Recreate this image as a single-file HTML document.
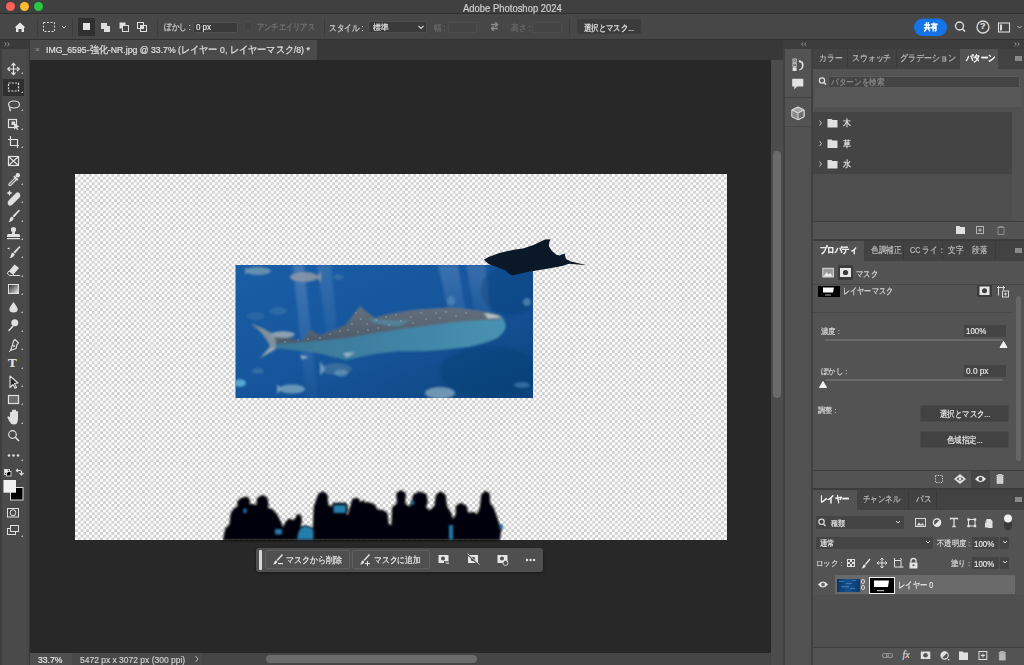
<!DOCTYPE html>
<html><head><meta charset="utf-8">
<style>
*{margin:0;padding:0;box-sizing:border-box}
html,body{width:1024px;height:665px;overflow:hidden;background:#282828;font-family:"Liberation Sans",sans-serif;color:#d8d8d8}
.a{position:absolute}
.t{position:absolute;white-space:nowrap;font-size:9px;line-height:10px;transform-origin:0 0;-webkit-text-stroke:0.2px currentColor}
svg{position:absolute;overflow:visible}
#title{left:0;top:0;width:1024px;height:14px;background:#404040;border-bottom:1px solid #2f2f2f}
#opts{left:0;top:14px;width:1024px;height:25px;background:#474747}
#below{left:0;top:39px;width:1024px;height:1px;background:#323232}
#tools{left:0;top:40px;width:29px;height:625px;background:#4a4a4a}
#tabbar{left:30px;top:40px;width:753px;height:20px;background:#383838}
#doctab{left:30px;top:40px;width:287px;height:20px;background:#4a4a4a}
#canvasbg{left:30px;top:60px;width:741px;height:593px;background:#282828}
#status{left:30px;top:653px;width:741px;height:12px;background:#494949}
#vscroll{left:771px;top:60px;width:12px;height:605px;background:#4c4c4c}
#vdiv{left:783px;top:40px;width:2px;height:625px;background:#424242}
#iconcol{left:785px;top:40px;width:26px;height:625px;background:#515151}
#pdiv{left:811px;top:40px;width:2px;height:625px;background:#404040}
#panel{left:813px;top:40px;width:211px;height:625px;background:#535353}
.chk{background-color:#fff;background-image:linear-gradient(45deg,#cdcdcd 25%,transparent 25%,transparent 75%,#cdcdcd 75%),linear-gradient(45deg,#cdcdcd 25%,transparent 25%,transparent 75%,#cdcdcd 75%);background-size:5.6px 5.6px;background-position:0 0,2.8px 2.8px}
.sep{position:absolute;width:1px;background:#3a3a3a}
.inp{position:absolute;background:#3b3b3b;border-radius:1px}
</style></head><body>
<div class="a" id="canvasbg"></div>
<div class="a" id="title"></div>
<div class="a" id="opts"></div>
<div class="a" id="below"></div>
<div class="a" id="tools"></div>
<div class="a" style="left:0;top:40px;width:2px;height:625px;background:#3e3e3e"></div>
<div class="a" style="left:26px;top:40px;width:3px;height:625px;background:#474747"></div>
<div class="a" style="left:29px;top:40px;width:1px;height:625px;background:#363636"></div>
<div class="a" id="tabbar"></div>
<div class="a" id="doctab"></div>
<div class="a" id="status"></div>
<div class="a" id="vscroll"></div>
<div class="a" id="vdiv"></div>
<div class="a" id="iconcol"></div>
<div class="a" id="pdiv"></div>
<div class="a" id="panel"></div>

<!-- TITLE -->
<div class="a" style="left:6px;top:2px;width:9px;height:9px;border-radius:50%;background:#fe5f57"></div>
<div class="a" style="left:20px;top:2px;width:9px;height:9px;border-radius:50%;background:#febc2e"></div>
<div class="a" style="left:34px;top:2px;width:9px;height:9px;border-radius:50%;background:#28c840"></div>

<!-- OPTIONS BAR -->
<svg style="left:0;top:14px" width="1024" height="25">
 <!-- home -->
 <path d="M14.5 13.5 L20 8.5 L25.5 13.5 L24 13.5 L24 18 L21.5 18 L21.5 15 L18.5 15 L18.5 18 L16 18 L16 13.5 Z" fill="#e6e6e6"/>
 <line x1="37.5" y1="4" x2="37.5" y2="22" stroke="#3c3c3c"/>
 <rect x="43.5" y="8.5" width="11" height="9" fill="none" stroke="#d8d8d8" stroke-dasharray="2 1.5"/>
 <path d="M62 12 L64 14 L66 12" fill="none" stroke="#cfcfcf" stroke-width="1"/>
 <line x1="72.5" y1="4" x2="72.5" y2="22" stroke="#3c3c3c"/>
 <rect x="78" y="4" width="17" height="18" fill="#303030"/>
 <rect x="83" y="9" width="7" height="7" fill="#e3e3e3"/>
 <rect x="101" y="9" width="6" height="6" fill="#dedede"/><rect x="104" y="12" width="6" height="6" fill="#dedede"/>
 <rect x="119.5" y="8.5" width="6" height="6" fill="#dedede"/><rect x="122.5" y="11.5" width="6" height="6" fill="#474747" stroke="#dedede"/>
 <rect x="137.5" y="8.5" width="6" height="6" fill="none" stroke="#dedede"/><rect x="140.5" y="11.5" width="6" height="6" fill="none" stroke="#dedede"/><rect x="140.5" y="11.5" width="3" height="3" fill="#dedede"/>
 <line x1="157.5" y1="4" x2="157.5" y2="22" stroke="#3c3c3c"/>
 <line x1="324.5" y1="4" x2="324.5" y2="22" stroke="#3c3c3c"/>
 <path d="M491 10.5 H497.5 M495.3 8.3 L497.5 10.5 L495.3 12.7 M498 14.5 H491.5 M493.7 12.3 L491.5 14.5 L493.7 16.7" fill="none" stroke="#8c8c8c" stroke-width="1.5"/>
 <line x1="569.5" y1="4" x2="569.5" y2="22" stroke="#3c3c3c"/>
 <rect x="914" y="4.5" width="33" height="17.5" rx="8.75" fill="#1473e6"/>
 <circle cx="959.5" cy="12" r="4" fill="none" stroke="#dcdcdc" stroke-width="1.4"/>
 <line x1="962.5" y1="15" x2="965" y2="17.5" stroke="#dcdcdc" stroke-width="1.6"/>
 <circle cx="983" cy="13" r="6" fill="none" stroke="#dcdcdc" stroke-width="1.3"/>
 <rect x="998.5" y="9" width="11" height="9" fill="none" stroke="#dcdcdc" stroke-width="1.1"/>
 <rect x="1000" y="10.5" width="2" height="6" fill="#dcdcdc"/>
 <path d="M1017.5 12 L1019.5 14 L1021.5 12" fill="none" stroke="#bdbdbd"/>
</svg>
<div class="t" style="left:980px;top:21px;font-size:9px;font-weight:bold;color:#dcdcdc">?</div>
<div class="inp" style="left:193px;top:21.7px;width:44.5px;height:11.6px;background:#3a3a3a;border:1px solid #505050"></div>
<div class="inp" style="left:367.5px;top:21.2px;width:59.5px;height:12px;background:#3a3a3a;border:1px solid #4e4e4e"></div>
<div class="inp" style="left:448px;top:21.5px;width:29px;height:11.5px;background:#444;border:1px solid #4e4e4e"></div>
<div class="inp" style="left:532px;top:21.5px;width:30px;height:11.5px;background:#444;border:1px solid #4e4e4e"></div>
<div class="inp" style="left:577px;top:19px;width:64px;height:15px;background:#3c3c3c"></div>
<svg style="left:0;top:14px" width="1024" height="25">
 <path d="M418.5 12 L421 14.5 L423.5 12" fill="none" stroke="#d0d0d0" stroke-width="1.1"/>
 <rect x="244" y="8" width="8" height="8" rx="1" fill="#424242" stroke="#505050" stroke-width="0.8"/>
</svg>


<div class="a" style="left:0;top:40px;width:29px;height:9px;background:#3a3a3a"></div>

<div class="a" style="left:3px;top:79px;width:21px;height:17px;background:#2f2f2f"></div>
<svg style="left:0;top:0" width="30" height="560">
<g fill="none" stroke="#e0e0e0" stroke-width="1.2">
 <!-- move 69 -->
 <path d="M13.5 63.5 V74.5 M8 69 H19"/>
 <path d="M11.5 65.5 L13.5 63.3 L15.5 65.5 M11.5 72.5 L13.5 74.7 L15.5 72.5 M10 67 L7.8 69 L10 71 M17 67 L19.2 69 L17 71" />
 <!-- marquee 87 -->
 <rect x="8.5" y="83" width="10" height="8" stroke-dasharray="2 1.3"/>
 <!-- lasso 106 -->
 <ellipse cx="14" cy="104.5" rx="5.5" ry="3.5"/>
 <path d="M10 107 Q9 110 11 111"/>
 <!-- object select 124 -->
 <rect x="8.5" y="119.5" width="8" height="8"/>
 <!-- crop 142 -->
 <path d="M10.5 136 V145.5 H19 M8 139.5 H17.5 V148"/>
 <!-- frame 161 -->
 <rect x="8.5" y="156.5" width="10" height="9"/>
 <path d="M8.5 156.5 L18.5 165.5 M18.5 156.5 L8.5 165.5"/>
 <!-- T 363 -->
 <!-- rect 399 -->
 <rect x="8.5" y="395.5" width="10" height="8" fill="#6a6a6a"/>
 <!-- zoom 436 -->
 <circle cx="12.5" cy="434.5" r="3.8"/>
 <path d="M15.3 437.3 L19 441" stroke-width="1.6"/>
 <!-- quick mask 512 -->
 <rect x="7.5" y="508.5" width="11" height="8.5" stroke-width="1"/>
 <ellipse cx="13" cy="512.7" rx="2.8" ry="3" stroke-width="1" />
 <!-- screen mode 531 -->
 <rect x="7.5" y="528.5" width="8" height="6" stroke-width="1"/>
 <rect x="10.5" y="525.5" width="8" height="6" stroke-width="1" fill="#4a4a4a"/>
</g>
<g fill="#e0e0e0">
 <path d="M11.5 121.5 H15 V123.5 L13.5 125 H11.5 Z"/>
 <path d="M14 122.5 L19.5 127 L17 127.3 L18.3 129.6 L17.2 130.2 L16 128 L14.2 129.5 Z"/>
 <!-- eyedropper 180 -->
 <circle cx="17.8" cy="175.2" r="2.2"/>
 <path d="M14.5 175.5 L18.5 179.5 L17.2 180.8 L13.2 176.8Z"/>
 <path d="M14.8 178.2 L16.3 179.7 L11 185 Q9.8 186.2 9 185.4 Q8.3 184.6 9.5 183.5Z" fill="none" stroke="#e0e0e0" stroke-width="1.1"/>
 <!-- healing 198 -->
 <path d="M9 200 L15.5 193.5 Q18.5 191 20 194 Q21 196.5 18.5 198.5 L12 205 Q9 207 7.8 204 Q7 202 9 200Z"/>
 <path d="M8.5 192 l1 -2 l1 2 l2 1 l-2 1 l-1 2 l-1 -2 l-2 -1 Z"/>
 <!-- brush 216 -->
 <path d="M19 209.5 L20 210.5 L14 217.5 L12.5 216 Z"/>
 <path d="M12 216.5 L13.7 218.2 Q13 221.5 8.5 222 Q10 220 10 218.5 Q10.5 216.8 12 216.5Z"/>
 <!-- stamp 234 -->
 <circle cx="13.5" cy="229.5" r="2.6"/>
 <path d="M12.3 231 H14.7 L15 234 H19 Q20 234.3 20 236 V237 H7 V236 Q7 234.3 8 234 H12 Z"/>
 <rect x="7" y="238" width="13" height="1.2"/>
 <!-- history brush 252 -->
 <path d="M19.5 246 L20.5 247 L15 253.5 L13.5 252 Z"/>
 <path d="M13 252.5 L14.7 254.2 Q14 257.5 9.5 258 Q11 256 11 254.5 Q11.5 252.8 13 252.5Z"/>
 <path d="M7 248.5 L9.5 247.5 L9.5 249.5 Z"/>
 <!-- eraser 271 -->
 <path d="M14.5 264.5 L19 268 L13.5 274.5 L9 271 Z"/>
 <path d="M9 271 L13.5 274.5 L12.5 275.5 H9.5 L7.7 274 Q7.2 273 8 272.2 Z" fill="none" stroke="#e0e0e0" stroke-width="1"/>
 <rect x="13" y="275" width="7" height="1"/>
 <!-- drop 307 -->
 <path d="M13.5 302 Q18 308 17.7 309.5 Q17.5 312.5 13.5 312.5 Q9.5 312.5 9.3 309.5 Q9 308 13.5 302Z"/>
 <!-- dodge 326 -->
 <circle cx="14.8" cy="322.8" r="3.5"/>
 <path d="M12.5 325.5 L8 330.5 L9 331.5 L13.7 326.5Z"/>
 <!-- pen 344 -->
 <path d="M15 339.5 L18.5 343 L17 344.5 L16 348.5 L10.5 350.5 L12.5 345 L13.5 341Z" fill="none" stroke="#e0e0e0" stroke-width="1.1" stroke-linejoin="round"/>
 <circle cx="14" cy="346" r="1"/>
 <path d="M9 352 L11.5 349.5" stroke="#e0e0e0" stroke-width="1"/>
 <!-- arrow 381 -->
 <path d="M10 376 L18 383 L14.5 383.5 L16.5 387.5 L15 388.3 L13 384.5 L10 387.5 Z" fill="#2a2a2a" stroke="#e0e0e0" stroke-width="1.1" stroke-linejoin="round"/>
 <!-- hand 418 -->
 <path d="M10 413 Q10 411.8 11 411.8 Q12 411.8 12 413 V410.7 Q12 409.5 13 409.5 Q14 409.5 14 410.7 V410.5 Q14.1 409.4 15 409.4 Q16 409.4 16 410.5 V412 Q16.1 411 17 411 Q18 411 18 412 V419 Q18 424.5 14 424.5 H13.5 Q11 424.5 9.5 421.5 L7.5 417.8 Q7 416.8 7.8 416.4 Q8.6 416 9.4 416.8 L10 417.6 Z"/>
 <!-- dots 455 -->
 <circle cx="9" cy="455.5" r="1.3"/><circle cx="13.5" cy="455.5" r="1.3"/><circle cx="18" cy="455.5" r="1.3"/>
 <!-- small indicators -->
 <path d="M21 74 L23 72 V74Z M21 93 L23 91 V93Z M21 111 L23 109 V111Z M21 130 L23 128 V130Z M21 148 L23 146 V148Z M21 185 L23 183 V185Z M21 203 L23 201 V203Z M21 222 L23 220 V222Z M21 240 L23 238 V240Z M21 258 L23 256 V258Z M21 277 L23 275 V277Z M21 295 L23 293 V295Z M21 313 L23 311 V313Z M21 332 L23 330 V332Z M21 350 L23 348 V350Z M21 369 L23 367 V369Z M21 387 L23 385 V387Z M21 405 L23 403 V405Z M21 424 L23 422 V424Z M21 461 L23 459 V461Z M21 537 L23 535 V537Z" fill="#bdbdbd"/>
</g>
<!-- gradient 289 -->
<defs><linearGradient id="gr1" x1="0" y1="0" x2="1" y2="1"><stop offset="0" stop-color="#222"/><stop offset="1" stop-color="#eee"/></linearGradient></defs>
<rect x="8.5" y="284.5" width="10" height="9" fill="url(#gr1)" stroke="#e0e0e0"/>
<!-- swatches -->
<rect x="10.5" y="487.5" width="12.5" height="12.5" fill="#000" stroke="#d8d8d8"/>
<rect x="3.5" y="480" width="12.5" height="12.7" fill="#f2f2f2"/>
<rect x="4.5" y="469.5" width="5" height="5" fill="none" stroke="#ddd" stroke-width="0.9"/>
<rect x="6.5" y="471.5" width="4.5" height="4.5" fill="#000" stroke="#ddd" stroke-width="0.9"/>
<rect x="4.8" y="469.8" width="3" height="3" fill="#eee"/>
<path d="M16.5 470.5 H20 Q21.5 470.5 21.5 472 V474.5 M19.5 473 L21.5 475 L23.5 473 M18 469 L16.3 470.5 L18 472" fill="none" stroke="#ddd" stroke-width="1.1"/>
</svg>
<div class="t" style="left:8px;top:356px;font-size:13px;line-height:14px;font-family:'Liberation Serif',serif;font-weight:bold;color:#e6e6e6">T</div>

<!-- icon column -->
<div class="a" style="left:783px;top:40px;width:241px;height:9px;background:#3c3c3c"></div>


<div class="a" style="left:785px;top:49px;width:26px;height:48px;background:#535353"></div>
<div class="a" style="left:785px;top:97px;width:26px;height:1px;background:#444"></div><div class="a" style="left:785px;top:98px;width:26px;height:28px;background:#535353"></div><div class="a" style="left:785px;top:126px;width:26px;height:1px;background:#484848"></div>
<svg style="left:0;top:0" width="1024" height="665">
 <g fill="#e2e2e2">
  <rect x="793" y="59" width="3.2" height="3.2" fill="none" stroke="#e2e2e2" stroke-width="0.8"/>
  <rect x="793" y="63.2" width="3.2" height="3.2" fill="none" stroke="#e2e2e2" stroke-width="0.8"/>
  <rect x="794.2" y="60.2" width="0.8" height="0.8"/><rect x="794.2" y="64.4" width="0.8" height="0.8"/>
  <rect x="792.6" y="67.3" width="4" height="3.7"/>
  <path d="M798.5 61.2 L800.2 59.6 L800.2 60.6 Q803.6 61.5 803.6 65.2 Q803.5 69.3 799.3 70.6 L799 69.6 Q802 68.5 802 65.2 Q802 62.7 800.2 62.2 L800.2 62.9Z"/>
  <path d="M792.2 78.8 H803.3 V86.4 H797 L794.3 89.6 V86.4 H792.2Z"/>
 </g>
 <path d="M798 107 L804 110 V116.8 L798 119.8 L791.8 116.8 V110Z" fill="#8a8a8a" stroke="#dcdcdc" stroke-width="1"/>
 <path d="M791.8 110 L798 113 L804 110 L798 107Z" fill="#a5a5a5" stroke="#dcdcdc" stroke-width="1" stroke-linejoin="round"/>
 <path d="M798 113 L804 110 V116.8 L798 119.8Z" fill="#6e6e6e" stroke="#dcdcdc" stroke-width="1" stroke-linejoin="round"/>
</svg>

<!-- PATTERN PANEL -->
<div class="a" style="left:813px;top:49px;width:211px;height:20px;background:#424242"></div>
<div class="a" style="left:960px;top:49px;width:38px;height:20px;background:#535353"></div>
<div class="a" style="left:1014.5px;top:56px;width:7px;height:5px;background:#8a8a8a"></div>
<div class="a" style="left:847px;top:49px;width:1px;height:20px;background:#3a3a3a"></div>
<div class="a" style="left:896px;top:49px;width:1px;height:20px;background:#3a3a3a"></div>
<div class="inp" style="left:828px;top:75.5px;width:192px;height:12px;background:#444;border:1px solid #5a5a5a"></div>
<svg style="left:0;top:0" width="1024" height="665">
 <circle cx="822" cy="80.5" r="2.6" fill="none" stroke="#e0e0e0" stroke-width="1.2"/>
 <path d="M824 82.5 L826 84.5" stroke="#e0e0e0" stroke-width="1.5"/>
</svg>
<div class="a" style="left:815px;top:88px;width:206px;height:19px;background:#585858"></div><div class="a" style="left:815px;top:107px;width:206px;height:5px;background:#4f4f4f"></div>
<div class="a" style="left:813px;top:112px;width:199px;height:62px;background:#444"></div>
<div class="a" style="left:813px;top:174px;width:199px;height:47px;background:#4e4e4e"></div>
<div class="a" style="left:1012px;top:112px;width:12px;height:109px;background:#525252"></div>
<div class="a" style="left:813px;top:221px;width:211px;height:1px;background:#3d3d3d"></div>
<svg style="left:0;top:0" width="1024" height="665">
 <g fill="none" stroke="#d0d0d0" stroke-width="0.9"><path d="M819.5 120.5 L821.5 123 L819.5 125.5 M819.5 141 L821.5 143.5 L819.5 146 M819.5 161.5 L821.5 164 L819.5 166.5"/></g>
 <g fill="#e0e0e0">
  <path d="M827.5 119 H831.5 L832.5 120 H837.5 V127.5 H827.5 Z"/>
  <path d="M827.5 139.5 H831.5 L832.5 140.5 H837.5 V148 H827.5 Z"/>
  <path d="M827.5 160 H831.5 L832.5 161 H837.5 V168.5 H827.5 Z"/>
  <!-- footer -->
  <path d="M956 226 H959.5 L960.5 227 H965 V234 H956 Z"/>
 </g>
 <rect x="976.5" y="226.5" width="7" height="7" fill="none" stroke="#bcbcbc" stroke-width="0.9"/>
 <path d="M980 228 V232 M978 230 H982" stroke="#bcbcbc" stroke-width="0.9"/>
 <path d="M997 227.5 H1005 M999 227.5 V226.5 H1003 V227.5 M998 228.5 V234.5 H1004 V228.5" fill="none" stroke="#8e8e8e" stroke-width="1"/>
</svg>

<!-- PROPERTIES PANEL -->
<div class="a" style="left:813px;top:239px;width:211px;height:2px;background:#3c3c3c"></div>
<div class="a" style="left:813px;top:241px;width:211px;height:20px;background:#424242"></div>
<div class="a" style="left:813px;top:241px;width:51px;height:20px;background:#535353"></div>
<div class="a" style="left:1014.5px;top:248px;width:7px;height:5px;background:#8a8a8a"></div>
<div class="a" style="left:903px;top:240px;width:1px;height:21px;background:#3a3a3a"></div>
<div class="a" style="left:942px;top:240px;width:1px;height:21px;background:#3a3a3a"></div>
<div class="a" style="left:995px;top:240px;width:1px;height:21px;background:#3a3a3a"></div>
<div class="a" style="left:838px;top:265px;width:15px;height:15px;background:#3c3c3c"></div>
<svg style="left:0;top:0" width="1024" height="665">
 <rect x="822.8" y="268.3" width="10.6" height="8.7" fill="#9a9a9a" stroke="#dcdcdc" stroke-width="1"/>
 <path d="M823.5 276.5 L826.5 272.3 L828.7 274.6 L830.3 273 L832.8 276.5Z" fill="#eeeeee"/>
 <rect x="840" y="268" width="11" height="9" fill="#e6e6e6"/>
 <circle cx="845.5" cy="272.5" r="2.6" fill="#3c3c3c"/>
 <rect x="818" y="286" width="22" height="11" fill="#000"/>
 <path d="M823 287.5 H834 L833 292.5 H823Z" fill="#fff"/>
 <rect x="825" y="294.5" width="6" height="1" fill="#aaa"/>
 <rect x="977" y="285" width="15" height="12" fill="#3c3c3c"/>
 <rect x="979.5" y="286.5" width="10" height="8.5" fill="#e6e6e6"/>
 <circle cx="984.5" cy="290.7" r="2.5" fill="#3c3c3c"/>
 <path d="M998.5 286 V295.5 M997 287.5 H1005 M1003.5 286 V290" fill="none" stroke="#d8d8d8" stroke-width="1"/>
 <rect x="1002.5" y="291" width="6" height="6" fill="#535353" stroke="#d8d8d8" stroke-width="1"/>
 <path d="M1005.5 292.5 V295.5 M1004 294 H1007" stroke="#d8d8d8" stroke-width="0.9"/>
</svg>
<div class="a" style="left:813px;top:284px;width:211px;height:1px;background:#474747"></div>
<div class="a" style="left:813px;top:312px;width:200px;height:1px;background:#484848"></div>
<div class="a" style="left:1016px;top:296px;width:5px;height:165px;background:#666;border-radius:3px"></div>
<div class="inp" style="left:964px;top:325px;width:42px;height:12px;background:#444"></div>
<div class="a" style="left:825px;top:338.5px;width:178px;height:2px;background:#6a6a6a;border-radius:1px"></div>
<div class="inp" style="left:964px;top:365px;width:42px;height:12px;background:#444"></div>
<div class="a" style="left:825px;top:379.2px;width:178px;height:2px;background:#6a6a6a;border-radius:1px"></div>
<svg style="left:0;top:0" width="1024" height="665">
 <path d="M1003.5 341.5 L1007 347.5 H1000Z" fill="#f2f2f2" stroke="#f2f2f2" stroke-linejoin="round"/>
 <path d="M823 381.5 L826.5 387.5 H819.5Z" fill="#f2f2f2" stroke="#f2f2f2" stroke-linejoin="round"/>
</svg>
<div class="inp" style="left:920px;top:405px;width:89px;height:17px;background:#424242;border:1px solid #4a4a4a"></div>
<div class="inp" style="left:920px;top:431px;width:89px;height:17px;background:#424242;border:1px solid #4a4a4a"></div>
<div class="a" style="left:813px;top:470px;width:211px;height:1px;background:#3d3d3d"></div>
<div class="a" style="left:971px;top:471px;width:19px;height:17px;background:#464646"></div>
<svg style="left:0;top:0" width="1024" height="665">
 <rect x="935.5" y="475.5" width="7" height="7" fill="none" stroke="#d0d0d0" stroke-dasharray="1.2 1.2"/>
 <path d="M954 479 L960 474 L966 479 L960 484Z" fill="#e0e0e0"/>
 <path d="M956.5 479 Q960 475.5 963.5 479 Q960 482.5 956.5 479Z" fill="#535353"/>
 <circle cx="960" cy="479" r="1.4" fill="#e0e0e0"/>
 <path d="M975 479 Q980.5 472.5 986 479 Q980.5 485.5 975 479Z" fill="#e8e8e8"/>
 <circle cx="980.5" cy="479" r="2" fill="#464646"/>
 <path d="M996 475.5 H1004 M998 475.5 V474.5 H1002 V475.5 M997 476.5 V483.5 H1003 V476.5Z" fill="#cfcfcf" stroke="#cfcfcf" stroke-width="0.8"/>
</svg>

<!-- LAYERS PANEL -->
<div class="a" style="left:813px;top:487.5px;width:211px;height:2px;background:#3c3c3c"></div>
<div class="a" style="left:813px;top:489.5px;width:211px;height:20px;background:#424242"></div>
<div class="a" style="left:813px;top:489.5px;width:44px;height:20px;background:#535353"></div>
<div class="a" style="left:908px;top:490px;width:1px;height:20px;background:#3a3a3a"></div>
<div class="a" style="left:936px;top:490px;width:1px;height:20px;background:#3a3a3a"></div>
<div class="a" style="left:1014.5px;top:497px;width:7px;height:5px;background:#8a8a8a"></div>
<div class="inp" style="left:816px;top:516px;width:88px;height:13px;background:#444"></div>
<div class="inp" style="left:816px;top:537px;width:117px;height:12px;background:#444"></div>
<div class="inp" style="left:972px;top:537px;width:27px;height:12px;background:#444"></div>
<div class="inp" style="left:1000px;top:537px;width:9px;height:12px;background:#444"></div>
<div class="inp" style="left:972px;top:557px;width:27px;height:12px;background:#444"></div>
<div class="inp" style="left:1000px;top:557px;width:9px;height:12px;background:#444"></div>
<div class="a" style="left:835px;top:575px;width:180px;height:19px;background:#6a6a6a"></div>
<div class="a" style="left:837px;top:578.5px;width:22.5px;height:13px;background:linear-gradient(90deg,#0b3468,#16528f 45%,#0c3a70)"></div>
<svg style="left:0;top:0" width="1024" height="665"><g fill="#4a90c0" opacity="0.7"><rect x="839" y="581" width="5" height="1"/><rect x="846" y="583" width="6" height="1"/><rect x="841" y="586" width="8" height="1.2"/><rect x="852" y="580" width="4" height="1"/><rect x="850" y="588" width="5" height="1"/></g></svg>
<div class="a" style="left:869px;top:577px;width:26px;height:17px;background:#000;border:1px solid #f0f0f0"></div>
<svg style="left:0;top:0" width="1024" height="665">
 <g fill="none" stroke="#d8d8d8" stroke-width="1">
  <circle cx="821.5" cy="521.8" r="2.7" stroke-width="1.2"/><path d="M823.5 524 L825.5 526" stroke-width="1.5"/>
  <path d="M896 521 L898 523 L900 521 M926 541 L928 543 L930 541 M1003 541 L1005 543 L1007 541 M1003 561 L1005 563 L1007 561"/>
  <rect x="915.5" y="518.5" width="10" height="8"/>
 </g>
 <path d="M916.5 525.5 L919 522.5 L921 524.5 L922.5 523 L924.5 525.5Z" fill="#d8d8d8"/>
 <circle cx="937" cy="522.5" r="4.2" fill="#e8e8e8"/>
 <path d="M934 525.5 L940 519.5 A4.2 4.2 0 0 0 934 525.5Z" fill="#535353"/>
 <circle cx="937" cy="522.5" r="3.6" fill="none" stroke="#e8e8e8" stroke-width="1.2"/>
 <!-- T -->
 <path d="M950.5 519.5 V518.5 H957.5 V519.5 M954 518.5 V526.5 M952.3 526.5 H955.7" fill="none" stroke="#e0e0e0" stroke-width="1.3"/>
 <!-- transform -->
 <rect x="968.5" y="519.5" width="6.5" height="6.5" fill="none" stroke="#e0e0e0"/>
 <rect x="967.3" y="518.3" width="2.4" height="2.4" fill="#e0e0e0"/><rect x="973.8" y="518.3" width="2.4" height="2.4" fill="#e0e0e0"/><rect x="967.3" y="524.8" width="2.4" height="2.4" fill="#e0e0e0"/><rect x="973.8" y="524.8" width="2.4" height="2.4" fill="#e0e0e0"/>
 <!-- smart obj -->
 <path d="M986.5 519 H990.5 L992.5 521 V528 H988 V523.5 H986.5Z" fill="#e0e0e0"/>
 <rect x="985" y="523" width="5.5" height="4.5" fill="#e0e0e0"/>
 <path d="M986 523 V521.5 Q986 520 987.7 520 Q989.5 520 989.5 521.5 V523" fill="none" stroke="#e0e0e0" stroke-width="1"/>
 <!-- toggle -->
 <rect x="1004" y="519" width="8" height="11" rx="4" fill="#3a3a3a"/>
 <circle cx="1008" cy="518.5" r="4" fill="#f0f0f0"/>
</g>
 <!-- lock icons -->
 <rect x="847" y="559" width="8" height="8" fill="#e0e0e0"/>
 <rect x="848" y="560" width="2" height="2" fill="#535353"/><rect x="852" y="560" width="2" height="2" fill="#535353"/><rect x="850" y="562" width="2" height="2" fill="#535353"/><rect x="848" y="564" width="2" height="2" fill="#535353"/><rect x="852" y="564" width="2" height="2" fill="#535353"/>
 <path d="M869.5 558.5 L870.5 559.5 L866 565 L865 564Z" fill="#e6e6e6"/>
 <path d="M864.5 564.5 L865.8 565.8 Q865 568.5 861.5 568.5 Q863 567 863 565.8 Q863.5 564.6 864.5 564.5Z" fill="#e6e6e6"/>
 <path d="M882 558 V568 M877 563 H887 M880.3 559.7 L882 558 L883.7 559.7 M880.3 566.3 L882 568 L883.7 566.3 M878.7 561.3 L877 563 L878.7 564.7 M885.3 561.3 L887 563 L885.3 564.7" fill="none" stroke="#e0e0e0" stroke-width="1"/>
 <path d="M894 560.5 H901 V567.5 M894.5 558 V567 H903.5 M900 558.5 L902 559.5" fill="none" stroke="#e0e0e0" stroke-width="1"/>
 <rect x="909.5" y="562.5" width="8" height="6" fill="#e6e6e6"/>
 <path d="M911 562.5 V560.5 Q911 558.5 913.5 558.5 Q916 558.5 916 560.5 V562.5" fill="none" stroke="#e6e6e6" stroke-width="1.3"/>
 <circle cx="913.5" cy="565.2" r="1" fill="#535353"/>
 <!-- layer row -->
 <path d="M818 584.5 Q823 578.5 828 584.5 Q823 590.5 818 584.5Z" fill="#eaeaea"/>
 <circle cx="823" cy="584.5" r="1.9" fill="#6a6a6a"/>
 <rect x="861.5" y="579.5" width="3" height="4" rx="1.5" fill="none" stroke="#ddd" stroke-width="0.9"/>
 <rect x="861.5" y="585.5" width="3" height="4" rx="1.5" fill="none" stroke="#ddd" stroke-width="0.9"/>
 <path d="M874 580.5 H889 L888 587 H874Z" fill="#fff"/>
 <rect x="877" y="590" width="7" height="1.2" fill="#bbb"/>
</svg>
<div class="a" style="left:813px;top:595px;width:211px;height:52px;background:#4f4f4f"></div>
<div class="a" style="left:813px;top:647px;width:211px;height:1px;background:#3d3d3d"></div>
<svg style="left:0;top:0" width="1024" height="665">
 <g fill="none" stroke="#8e8e8e" stroke-width="1.1">
  <rect x="882.5" y="653.5" width="6" height="4" rx="2"/><rect x="886.5" y="653.5" width="6" height="4" rx="2"/>
 </g>
 <rect x="920.8" y="651.5" width="9.5" height="7.5" fill="#e0e0e0"/>
 <circle cx="925.5" cy="655.2" r="2.3" fill="#535353"/>
 <circle cx="944.6" cy="655.5" r="3.6" fill="none" stroke="#e0e0e0" stroke-width="1.1"/>
 <path d="M942 658 L947.2 652.8 A3.6 3.6 0 0 0 942 658Z" fill="#e0e0e0"/>
 <rect x="948" y="659" width="1.3" height="1.3" fill="#e0e0e0"/>
 <path d="M959 651.5 H962.5 L963.5 652.5 H968 V660 H959Z" fill="#e0e0e0"/>
 <rect x="979" y="651.5" width="7.8" height="8" fill="none" stroke="#e0e0e0" stroke-width="1"/>
 <path d="M982.9 653.5 V657.5 M980.9 655.5 H984.9" stroke="#e0e0e0"/>
 <path d="M998.5 652.5 H1006 M1000.5 652.5 V651.5 H1004 V652.5 M999.3 653.5 V660 H1005.2 V653.5Z" fill="#b8b8b8" stroke="#b8b8b8" stroke-width="0.8"/>
</svg>
<div class="t" style="left:902.5px;top:650px;font-size:10px;font-style:italic;font-family:'Liberation Serif',serif;color:#d8d8d8">fx</div>

<!-- doc tab -->
<div class="t" style="left:35px;top:45px;font-size:8px;color:#8a8a8a">×</div>
<!-- v scroll thumb -->
<div class="a" style="left:773px;top:151px;width:8px;height:247px;background:#6b6b6b;border-radius:4px"></div>
<!-- status bar -->
<div class="a" style="left:30px;top:653px;width:42px;height:12px;background:#4f4f4f"></div>

<div class="a" style="left:202px;top:653px;width:569px;height:12px;background:#454545"></div>
<div class="a" style="left:266px;top:655px;width:211px;height:8px;background:#6b6b6b;border-radius:4px"></div>

<!-- CANVAS IMAGE -->
<div class="a chk" style="left:75px;top:174px;width:652px;height:366px"></div>
<svg style="left:0;top:0" width="1024" height="665">
 <defs>
  <linearGradient id="bl" x1="0" y1="0" x2="1" y2="1">
   <stop offset="0" stop-color="#1a5ea6"/><stop offset="0.5" stop-color="#16559c"/><stop offset="1" stop-color="#0e447e"/>
  </linearGradient>
  <linearGradient id="ray" x1="0" y1="0" x2="0" y2="1">
   <stop offset="0" stop-color="#a8c0e0" stop-opacity="0.28"/><stop offset="1" stop-color="#a8c0e0" stop-opacity="0.03"/>
  </linearGradient>
  <linearGradient id="belly" x1="0" y1="0" x2="1" y2="0">
   <stop offset="0" stop-color="#3a7492"/><stop offset="0.6" stop-color="#4084a6"/><stop offset="1" stop-color="#4a92b2"/>
  </linearGradient>
  <linearGradient id="back" x1="0" y1="0" x2="0" y2="1">
   <stop offset="0" stop-color="#66717d"/><stop offset="1" stop-color="#485767"/>
  </linearGradient>
  <filter id="bl1" x="-10%" y="-10%" width="120%" height="120%"><feGaussianBlur stdDeviation="0.9"/></filter>
  <filter id="bl2" x="-20%" y="-20%" width="140%" height="140%"><feGaussianBlur stdDeviation="1.5"/></filter>
  <clipPath id="imgclip"><rect x="235.5" y="265" width="297.5" height="133"/></clipPath>
 </defs>
 <rect x="235.5" y="265" width="297.5" height="133" fill="url(#bl)"/>
 <g clip-path="url(#imgclip)">
  <g filter="url(#bl2)">
   <path d="M293 265 L304 265 L318 398 L306 398Z" fill="url(#ray)"/>
   <path d="M317 265 L331 265 L340 360 L330 360Z" fill="url(#ray)" opacity="0.7"/>
   <path d="M438 265 L458 265 L470 340 L455 340Z" fill="url(#ray)" opacity="0.9"/>
   <path d="M466 265 L485 265 L492 330 L478 330Z" fill="url(#ray)" opacity="0.8"/>
   <ellipse cx="490" cy="372" rx="50" ry="26" fill="#0c3a6a" opacity="0.35"/>
   <ellipse cx="510" cy="290" rx="30" ry="25" fill="#0c3a6a" opacity="0.3"/>
  </g>
  <g filter="url(#bl1)">
   <ellipse cx="258" cy="271" rx="13" ry="4" fill="#7097b0" opacity="0.85"/>
   <path d="M245 267 L249 271 L245 275Z" fill="#7097b0" opacity="0.85"/>
   <ellipse cx="304" cy="277" rx="14" ry="5" fill="#8a97a6" opacity="0.9"/>
   <path d="M321 271 L317 277 L321 283Z" fill="#8a97a6"/>
   <ellipse cx="338" cy="277" rx="6" ry="3" fill="#3f78a8" opacity="0.6"/>
   <ellipse cx="278" cy="311" rx="9" ry="4" fill="#3a74a6" opacity="0.6"/>
   <ellipse cx="256" cy="316" rx="9" ry="4" fill="#3a74a6" opacity="0.5"/>
   <ellipse cx="451" cy="301" rx="4" ry="5" fill="#5a8fb8" opacity="0.6"/>
   <ellipse cx="527" cy="302" rx="4" ry="4" fill="#6a9cc0" opacity="0.6"/>
   <ellipse cx="336" cy="369" rx="16" ry="6" fill="#3a6e9c" opacity="0.9"/>
   <ellipse cx="341" cy="373" rx="7" ry="3.5" fill="#6a9ab8" opacity="0.7"/>
   <path d="M320 361 L325 369 L320 376Z" fill="#7aaac8" opacity="0.8"/>
   <ellipse cx="292" cy="389" rx="13" ry="4.5" fill="#6f9fbd" opacity="0.9"/>
   <path d="M277 384 L282 389 L277 394Z" fill="#6f9fbd"/>
   <ellipse cx="240" cy="383" rx="6" ry="3.8" fill="#5fb0d8" opacity="0.9"/>
   <ellipse cx="258" cy="371" rx="6" ry="3" fill="#4a7fae" opacity="0.6"/>
   <ellipse cx="440" cy="393" rx="15" ry="6" fill="#7ea2bc" opacity="0.85"/>
   <ellipse cx="522" cy="385" rx="8" ry="3" fill="#4f86b2" opacity="0.6"/>
  </g>
  <!-- whale shark -->
  <g filter="url(#bl1)">
   <path d="M251 323.7 Q262 327 272.8 333.8 Q288 338 302 341 L310.7 329.5 L319.4 335.3 Q333 331 345.6 325 L360 306.2 Q366 312 374.7 317.8 Q392 313 409.6 310.6 Q430 308 453.3 307.7 Q472 309 485.3 312 Q495 313 501.3 316.4 Q506 321 505.7 328 Q503 334 497 338.2 Q484 344 467.8 347 Q446 350 424 351.3 Q410 351 398 351.3 Q378 353 360 357 L345.6 360 Q334 357 322.3 354.2 Q308 351 293.2 349.9 L275.7 348.4 L259.7 358.6 L272.8 347 Q264 333 251 323.7Z" fill="url(#belly)"/>
   <path d="M251 323.7 Q262 327 272.8 333.8 Q288 338 302 341 L310.7 329.5 L319.4 335.3 Q333 331 345.6 325 L360 306.2 Q366 312 374.7 317.8 Q392 313 409.6 310.6 Q430 308 453.3 307.7 Q472 309 485.3 312 Q495 313 501.3 316.4 L501 319.5 Q475 320 453.3 322.2 Q425 326 398 329.5 Q370 334 345.6 338.2 Q310 342 275.7 344 L272.8 347 Q264 333 251 323.7Z" fill="url(#back)"/>
   <path d="M484 313 Q497 314 502 317.5 L488 318.5Z" fill="#c4ccd2" opacity="0.9"/>
   <path d="M251 323.7 Q262 327 272.8 333.8 L276 340 L275.7 348.4 L259.7 358.6 L270 346 Q264 333 251 323.7Z" fill="#7f919e"/>
   <path d="M272 347 L276 349 L262 357Z" fill="#a8b8c2" opacity="0.7"/>
   <ellipse cx="283" cy="334.5" rx="12" ry="3.2" fill="#9aaab6" opacity="0.9"/>
   <path d="M300 355 L309 357 L302 359.5Z M343 353 L355 352.5 L347 357.5Z" fill="#b0c4d0" opacity="0.8"/>
   <path d="M370 318 Q390 322 410 320 L400 326 Q385 326 372 322Z" fill="#4aa0c0" opacity="0.5"/>
  </g>
  <g fill="#d8e0e6" opacity="0.55">
   <circle cx="356" cy="313" r="0.7"/><circle cx="361" cy="319" r="0.7"/><circle cx="352" cy="324" r="0.7"/><circle cx="367" cy="324" r="0.7"/>
   <circle cx="340" cy="331" r="0.7"/><circle cx="330" cy="334" r="0.7"/><circle cx="320" cy="338" r="0.7"/><circle cx="348" cy="330" r="0.7"/>
   <circle cx="376" cy="320" r="0.7"/><circle cx="386" cy="317" r="0.7"/><circle cx="396" cy="315" r="0.7"/><circle cx="378" cy="328" r="0.7"/>
   <circle cx="389" cy="325" r="0.7"/><circle cx="401" cy="321" r="0.7"/><circle cx="411" cy="317" r="0.7"/><circle cx="421" cy="313" r="0.7"/>
   <circle cx="413" cy="323" r="0.7"/><circle cx="426" cy="319" r="0.7"/><circle cx="436" cy="313" r="0.7"/><circle cx="446" cy="312" r="0.7"/>
   <circle cx="358" cy="332" r="0.7"/><circle cx="368" cy="330" r="0.7"/><circle cx="298" cy="340" r="0.7"/><circle cx="308" cy="339" r="0.7"/>
   <circle cx="456" cy="316" r="0.7"/><circle cx="440" cy="318" r="0.7"/><circle cx="466" cy="313" r="0.7"/><circle cx="285" cy="342" r="0.7"/>
  </g>
 </g>
 </g>
 <!-- manta -->
 <path d="M484 259.5 Q488 256.5 494 255 Q506 250.5 523 248.5 Q535 245 545 239.5 L550.5 239.3 Q548.5 243 549 246.5 Q551 251 556 254.5 L559.5 255.5 L564.5 253.5 L566 259 L571 261.5 L587 265.2 L569 263.8 Q563 266 557 267 Q540 270 527 272 Q518 274 512 275.5 Q507.5 273 506 270.5 Q497 267 489.5 264.5 Q486 262.5 484 259.5Z" fill="#0b1828"/>
 <!-- people silhouettes -->
 <g filter="url(#bl1)">
  <path d="M223.5 540.0 L225.7 529.0 L230.0 524.7 L231.3 513.3 L234.2 509.0 L238.4 506.2 L237.7 502.0 L241.2 498.5 L247.0 497.0 L249.7 500.6 L248.3 504.0 L254.0 504.8 L256.8 506.2 L257.5 498.5 L262.5 495.6 L266.7 497.7 L268.2 504.8 L266.7 507.7 L272.4 509.8 L276.7 514.7 L281.0 523.2 L283.0 529.0 L285.9 522.5 L289.4 519.0 L293.7 521.0 L296.5 517.6 L297.2 514.7 L300.7 515.5 L301.4 521.8 L299.3 527.5 L305.0 526.0 L310.7 527.5 L313.5 530.0 L314.2 507.7 L317.0 499.0 L319.2 493.5 L323.4 492.0 L327.0 495.0 L327.6 504.8 L332.0 507.7 L333.3 503.4 L346.0 503.4 L347.5 509.0 L346.0 513.3 L347.5 517.6 L351.7 503.4 L353.0 499.0 L358.0 498.5 L360.2 503.4 L363.0 500.6 L362.8 500.6 L365.7 503.4 L368.5 502.7 L374.2 504.8 L377.0 509.8 L382.7 510.5 L386.9 513.3 L388.3 524.7 L391.9 526.0 L392.6 507.7 L397.5 503.4 L396.8 493.5 L401.0 490.7 L405.3 493.5 L404.6 503.4 L409.6 507.7 L412.4 500.6 L413.8 494.9 L419.5 492.0 L425.9 494.2 L427.3 502.0 L425.2 507.0 L429.4 511.2 L435.0 506.2 L436.5 494.9 L440.7 492.0 L445.0 494.9 L446.4 506.2 L450.7 513.3 L452.8 520.4 L456.3 514.7 L456.3 506.2 L460.6 503.4 L466.2 506.2 L467.6 513.3 L473.3 512.6 L477.6 514.7 L480.4 507.7 L481.8 494.9 L485.4 491.4 L489.0 493.5 L489.6 503.4 L493.1 507.7 L496.7 517.6 L498.8 524.7 L501.6 526.0 L500.2 533.2 L499.5 540.0Z" fill="#040507" stroke="#040507" stroke-width="1.2" stroke-linejoin="round"/>
 </g>
 <g fill="#2a8cbc" opacity="0.9" filter="url(#bl1)">
  <rect x="243.5" y="508.5" width="3" height="4.5"/>
  <rect x="275" y="529" width="7" height="5.5" rx="1"/>
  <path d="M297 539.5 Q298 529 303 526.5 Q309 525.5 313.5 530 L313.5 539.5Z"/>
  <rect x="333.5" y="505" width="12.5" height="8" rx="1"/>
  <rect x="449" y="525" width="4" height="14.5"/>
  <rect x="411" y="500.6" width="3" height="4"/>
  <rect x="499.5" y="524.7" width="3" height="4.3"/>
 </g>
</svg>
<!-- floating bar -->
<div class="a" style="left:256px;top:548px;width:287px;height:24px;background:#4f4f4f;border-radius:3px;box-shadow:0 1px 3px rgba(0,0,0,.4)"></div>
<div class="a" style="left:259px;top:550px;width:3px;height:20px;background:#d8d8d8;border-radius:1px"></div>
<div class="a" style="left:265px;top:550px;width:85px;height:19px;border:1px solid #5f5f5f;border-radius:2px"></div>
<div class="a" style="left:352px;top:550px;width:78px;height:19px;border:1px solid #5f5f5f;border-radius:2px"></div>
<svg style="left:0;top:0" width="1024" height="665">
 <g fill="#e6e6e6">
  <path d="M282 554 L283 555 L277.5 561 L276.5 560Z"/>
  <path d="M276 560.5 L277.3 561.8 Q276.5 564.5 273 564.5 Q274.5 563 274.5 561.8 Q275 560.6 276 560.5Z"/>
  <rect x="278" y="563" width="5" height="1.2"/>
  <path d="M369 554 L370 555 L364.5 561 L363.5 560Z"/>
  <path d="M363 560.5 L364.3 561.8 Q363.5 564.5 360 564.5 Q361.5 563 361.5 561.8 Q362 560.6 363 560.5Z"/>
  <path d="M367.5 561 V566 M365 563.5 H370" stroke="#e6e6e6" stroke-width="1.1"/>
  <rect x="438.5" y="555" width="10" height="8"/>
  <rect x="468" y="555" width="10" height="8"/>
  <rect x="497.5" y="555" width="10" height="8"/>
  <circle cx="527" cy="560" r="1.2"/><circle cx="530.5" cy="560" r="1.2"/><circle cx="534" cy="560" r="1.2"/>
 </g>
 <circle cx="443" cy="558.5" r="2" fill="#4f4f4f"/>
 <circle cx="473" cy="559" r="2.2" fill="#4f4f4f"/>
 <path d="M467 554 L479 565" stroke="#4f4f4f" stroke-width="1.5"/>
 <path d="M467.5 553.5 L479.5 564.5" stroke="#e6e6e6" stroke-width="0.8"/>
 <circle cx="502" cy="558.5" r="2" fill="#4f4f4f"/>
 <rect x="444" y="561" width="6" height="3" fill="#4f4f4f"/>
 <path d="M445 562 H449 M446 563.5 H449" stroke="#ddd" stroke-width="0.7"/>
 <circle cx="505.5" cy="563" r="2.5" fill="#4f4f4f" stroke="#e6e6e6" stroke-width="0.8"/>
</svg>

<svg style="left:0;top:0" width="1024" height="665">
 <g fill="none" stroke="#a0a0a0" stroke-width="0.9">
  <path d="M4.5 42.5 L6.3 44.2 L4.5 45.9 M7.5 42.5 L9.3 44.2 L7.5 45.9"/>
  <path d="M803.3 42.5 L801.5 44.2 L803.3 45.9 M806.3 42.5 L804.5 44.2 L806.3 45.9"/>
  <path d="M1014.5 42.5 L1016.3 44.2 L1014.5 45.9 M1017.5 42.5 L1019.3 44.2 L1017.5 45.9"/>
 </g>
 <path d="M195.5 656 L198 659 L195.5 662" fill="none" stroke="#b8b8b8" stroke-width="1"/>
</svg>
<div class="t" style="left:462.70px;top:2.58px;font-size:10px;line-height:12px;color:#cfcfcf;transform:scaleX(0.945)">Adobe Photoshop 2024</div>
<div class="t" style="left:164.00px;top:22.15px;font-size:8.5px;line-height:10.5px;color:#d0d0d0;transform:scaleX(0.839)">ぼかし :</div>
<div class="t" style="left:196.00px;top:22.40px;font-size:9px;line-height:11px;color:#e6e6e6;transform:scaleX(0.882)">0 px</div>
<div class="t" style="left:257.20px;top:22.40px;font-size:8.5px;line-height:10.5px;color:#767676;transform:scaleX(0.804)">アンチエイリアス</div>
<div class="t" style="left:329.15px;top:22.50px;font-size:8.5px;line-height:10.5px;color:#d0d0d0;transform:scaleX(0.846)">スタイル :</div>
<div class="t" style="left:372.50px;top:23.00px;font-size:8px;line-height:10px;color:#e0e0e0;transform:scaleX(0.967)">標準</div>
<div class="t" style="left:434.00px;top:22.50px;font-size:8.5px;line-height:10.5px;color:#6a6a6a;transform:scaleX(0.846)">幅 :</div>
<div class="t" style="left:510.70px;top:22.50px;font-size:8.5px;line-height:10.5px;color:#6a6a6a;transform:scaleX(0.868)">高さ :</div>
<div class="t" style="left:583.80px;top:22.65px;font-size:8.5px;line-height:10.5px;color:#e6e6e6;transform:scaleX(0.818)">選択とマスク...</div>
<div class="t" style="left:923.60px;top:21.65px;font-size:8.5px;line-height:10.5px;color:#ffffff;font-weight:bold;transform:scaleX(0.739)">共有</div>
<div class="t" style="left:45.98px;top:43.65px;font-size:9.5px;line-height:11.5px;color:#e0e0e0;transform:scaleX(0.916)">IMG_6595-強化-NR.jpg @ 33.7% (レイヤー 0, レイヤーマスク/8) *</div>
<div class="t" style="left:38.20px;top:655.15px;font-size:9px;line-height:11px;color:#e6e6e6;transform:scaleX(0.958)">33.7%</div>
<div class="t" style="left:79.80px;top:655.15px;font-size:9px;line-height:11px;color:#d0d0d0;transform:scaleX(0.942)">5472 px x 3072 px (300 ppi)</div>
<div class="t" style="left:285.51px;top:554.50px;font-size:8.5px;line-height:10.5px;color:#e6e6e6;transform:scaleX(0.892)">マスクから削除</div>
<div class="t" style="left:374.14px;top:554.50px;font-size:8.5px;line-height:10.5px;color:#e6e6e6;transform:scaleX(0.864)">マスクに追加</div>
<div class="t" style="left:818.93px;top:52.80px;font-size:8.5px;line-height:10.5px;color:#bcbcbc;transform:scaleX(0.865)">カラー</div>
<div class="t" style="left:852.13px;top:52.80px;font-size:8.5px;line-height:10.5px;color:#bcbcbc;transform:scaleX(0.874)">スウォッチ</div>
<div class="t" style="left:900.11px;top:52.80px;font-size:8.5px;line-height:10.5px;color:#bcbcbc;transform:scaleX(0.885)">グラデーション</div>
<div class="t" style="left:965.50px;top:52.80px;font-size:8.5px;line-height:10.5px;color:#f0f0f0;font-weight:bold;transform:scaleX(0.822)">パターン</div>
<div class="t" style="left:830.70px;top:77.30px;font-size:8.5px;line-height:10.5px;color:#8a8a8a;transform:scaleX(0.854)">パターンを検索</div>
<div class="t" style="left:843.00px;top:118.25px;font-size:8.5px;line-height:10.5px;color:#e6e6e6;transform:scaleX(0.889)">木</div>
<div class="t" style="left:843.00px;top:138.75px;font-size:8.5px;line-height:10.5px;color:#e6e6e6;transform:scaleX(0.889)">草</div>
<div class="t" style="left:843.00px;top:159.25px;font-size:8.5px;line-height:10.5px;color:#e6e6e6;transform:scaleX(0.889)">水</div>
<div class="t" style="left:820.00px;top:245.20px;font-size:8.5px;line-height:10.5px;color:#f0f0f0;font-weight:bold;transform:scaleX(0.830)">プロパティ</div>
<div class="t" style="left:871.00px;top:245.20px;font-size:8.5px;line-height:10.5px;color:#bcbcbc;transform:scaleX(0.850)">色調補正</div>
<div class="t" style="left:909.70px;top:245.45px;font-size:8.5px;line-height:10.5px;color:#bcbcbc;transform:scaleX(0.845)">CC ライ：</div>
<div class="t" style="left:948.40px;top:245.20px;font-size:8.5px;line-height:10.5px;color:#bcbcbc;transform:scaleX(0.844)">文字</div>
<div class="t" style="left:972.00px;top:245.20px;font-size:8.5px;line-height:10.5px;color:#bcbcbc;transform:scaleX(0.844)">段落</div>
<div class="t" style="left:856.18px;top:268.55px;font-size:8.5px;line-height:10.5px;color:#d6d6d6;transform:scaleX(0.816)">マスク</div>
<div class="t" style="left:843.31px;top:285.50px;font-size:8.5px;line-height:10.5px;color:#d6d6d6;transform:scaleX(0.793)">レイヤーマスク</div>
<div class="t" style="left:821.30px;top:326.80px;font-size:8px;line-height:10px;color:#d6d6d6;transform:scaleX(0.925)">濃度 :</div>
<div class="t" style="left:966.40px;top:326.15px;font-size:9px;line-height:11px;color:#e6e6e6;transform:scaleX(0.883)">100%</div>
<div class="t" style="left:821.30px;top:366.50px;font-size:8px;line-height:10px;color:#d6d6d6;transform:scaleX(0.929)">ぼかし :</div>
<div class="t" style="left:966.40px;top:366.25px;font-size:9px;line-height:11px;color:#e6e6e6;transform:scaleX(0.916)">0.0 px</div>
<div class="t" style="left:818.30px;top:405.70px;font-size:8px;line-height:10px;color:#d6d6d6;transform:scaleX(0.900)">調整 :</div>
<div class="t" style="left:939.80px;top:408.50px;font-size:8.5px;line-height:10.5px;color:#e6e6e6;transform:scaleX(0.821)">選択とマスク...</div>
<div class="t" style="left:946.80px;top:434.50px;font-size:8.5px;line-height:10.5px;color:#e6e6e6;transform:scaleX(0.828)">色域指定...</div>
<div class="t" style="left:819.78px;top:494.10px;font-size:8.5px;line-height:10.5px;color:#f0f0f0;font-weight:bold;transform:scaleX(0.820)">レイヤー</div>
<div class="t" style="left:863.40px;top:494.10px;font-size:8.5px;line-height:10.5px;color:#bcbcbc;transform:scaleX(0.833)">チャンネル</div>
<div class="t" style="left:915.60px;top:494.10px;font-size:8.5px;line-height:10.5px;color:#bcbcbc;transform:scaleX(0.847)">パス</div>
<div class="t" style="left:830.60px;top:518.60px;font-size:8px;line-height:10px;color:#e0e0e0;transform:scaleX(0.881)">種類</div>
<div class="t" style="left:820.00px;top:539.00px;font-size:8px;line-height:10px;color:#e0e0e0;transform:scaleX(0.933)">通常</div>
<div class="t" style="left:936.80px;top:539.25px;font-size:8px;line-height:10px;color:#d6d6d6;transform:scaleX(0.911)">不透明度 :</div>
<div class="t" style="left:974.00px;top:538.50px;font-size:9px;line-height:11px;color:#e6e6e6;transform:scaleX(0.883)">100%</div>
<div class="t" style="left:815.87px;top:559.15px;font-size:8px;line-height:10px;color:#d6d6d6;transform:scaleX(0.933)">ロック :</div>
<div class="t" style="left:950.90px;top:559.00px;font-size:8px;line-height:10px;color:#d6d6d6;transform:scaleX(0.935)">塗り :</div>
<div class="t" style="left:974.00px;top:558.50px;font-size:9px;line-height:11px;color:#e6e6e6;transform:scaleX(0.883)">100%</div>
<div class="t" style="left:898.48px;top:580.20px;font-size:8.5px;line-height:10.5px;color:#e6e6e6;transform:scaleX(0.817)">レイヤー 0</div>
</body></html>
